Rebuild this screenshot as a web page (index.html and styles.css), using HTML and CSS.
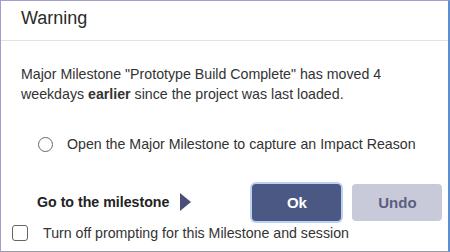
FILE: index.html
```html
<!DOCTYPE html>
<html>
<head>
<meta charset="utf-8">
<link rel="stylesheet" href="styles.css">
</head>
<body>
<div class="dialog">
  <div class="header"><span class="title">Warning</span></div>
  <div class="body">
    <p class="msg">Major Milestone "Prototype Build Complete" has moved 4 weekdays <b>earlier</b> since the project was last loaded.</p>
    <div class="option">
      <span class="radio"></span>
      <span class="opt-text">Open the Major Milestone to capture an Impact Reason</span>
    </div>
    <div class="actions">
      <span class="goto">Go to the milestone</span>
      <span class="arrow"></span>
      <button class="btn ok">Ok</button>
      <button class="btn undo">Undo</button>
    </div>
    <div class="check-row">
      <span class="checkbox"></span>
      <span class="check-text">Turn off prompting for this Milestone and session</span>
    </div>
  </div>
</div>
</body>
</html>
```
FILE: styles.css
```css
html, body {
  margin: 0;
  padding: 0;
  background: #ffffff;
}
.dialog {
  width: 450px;
  height: 252px;
  box-sizing: border-box;
  border-top: 1px solid #a39fcc;
  border-left: 1px solid #a39fcc;
  border-right: 2px solid #5b8fd2;
  border-bottom: 1px solid #9a9aa8;
  font-family: "Liberation Sans", Arial, sans-serif;
  color: #333333;
  display: flex;
  flex-direction: column;
}
.header {
  height: 40px;
  border-bottom: 1px solid #e2e2e2;
  box-sizing: border-box;
  padding: 7px 0 0 20px;
}
.title {
  font-size: 18px;
  color: #2a2a2a;
}
.msg {
  margin: 23px 0 0 20px;
  font-size: 14.2px;
  line-height: 20px;
  width: 385px;
}
.option {
  display: flex;
  align-items: center;
  margin: 30px 0 0 37px;
  height: 20px;
}
.radio {
  border: 1.5px solid #666;
  border-radius: 50%;
  box-sizing: border-box;
  width: 15px;
  height: 15px;
}
.opt-text {
  margin-left: 14px;
  font-size: 14.2px;
}
.actions {
  display: flex;
  align-items: center;
  margin: 29px 0 0 36px;
  height: 38px;
}
.goto {
  font-weight: bold;
  font-size: 14.2px;
  color: #222;
}
.arrow {
  width: 0;
  height: 0;
  border-top: 9.5px solid transparent;
  border-bottom: 9.5px solid transparent;
  border-left: 11px solid #4b4f7a;
  margin-left: 11px;
}
.btn {
  font-family: "Liberation Sans", Arial, sans-serif;
  font-weight: bold;
  font-size: 15px;
  width: 90px;
  height: 37px;
  border-radius: 4px;
  border: none;
  padding: 0;
}
.ok {
  margin-left: 61px;
  width: 89px;
  background: #4a5883;
  color: #ffffff;
  box-shadow: 0 0 0 2px #bcd0f4;
}
.undo {
  margin-left: 11px;
  background: #c9cad9;
  color: #5a5f82;
}
.check-row {
  display: flex;
  align-items: center;
  margin: 4px 0 0 11px;
}
.checkbox {
  width: 16px;
  height: 16px;
  border: 1.5px solid #666;
  border-radius: 3px;
  box-sizing: border-box;
}
.check-text {
  margin-left: 15px;
  font-size: 14.2px;
}
```
